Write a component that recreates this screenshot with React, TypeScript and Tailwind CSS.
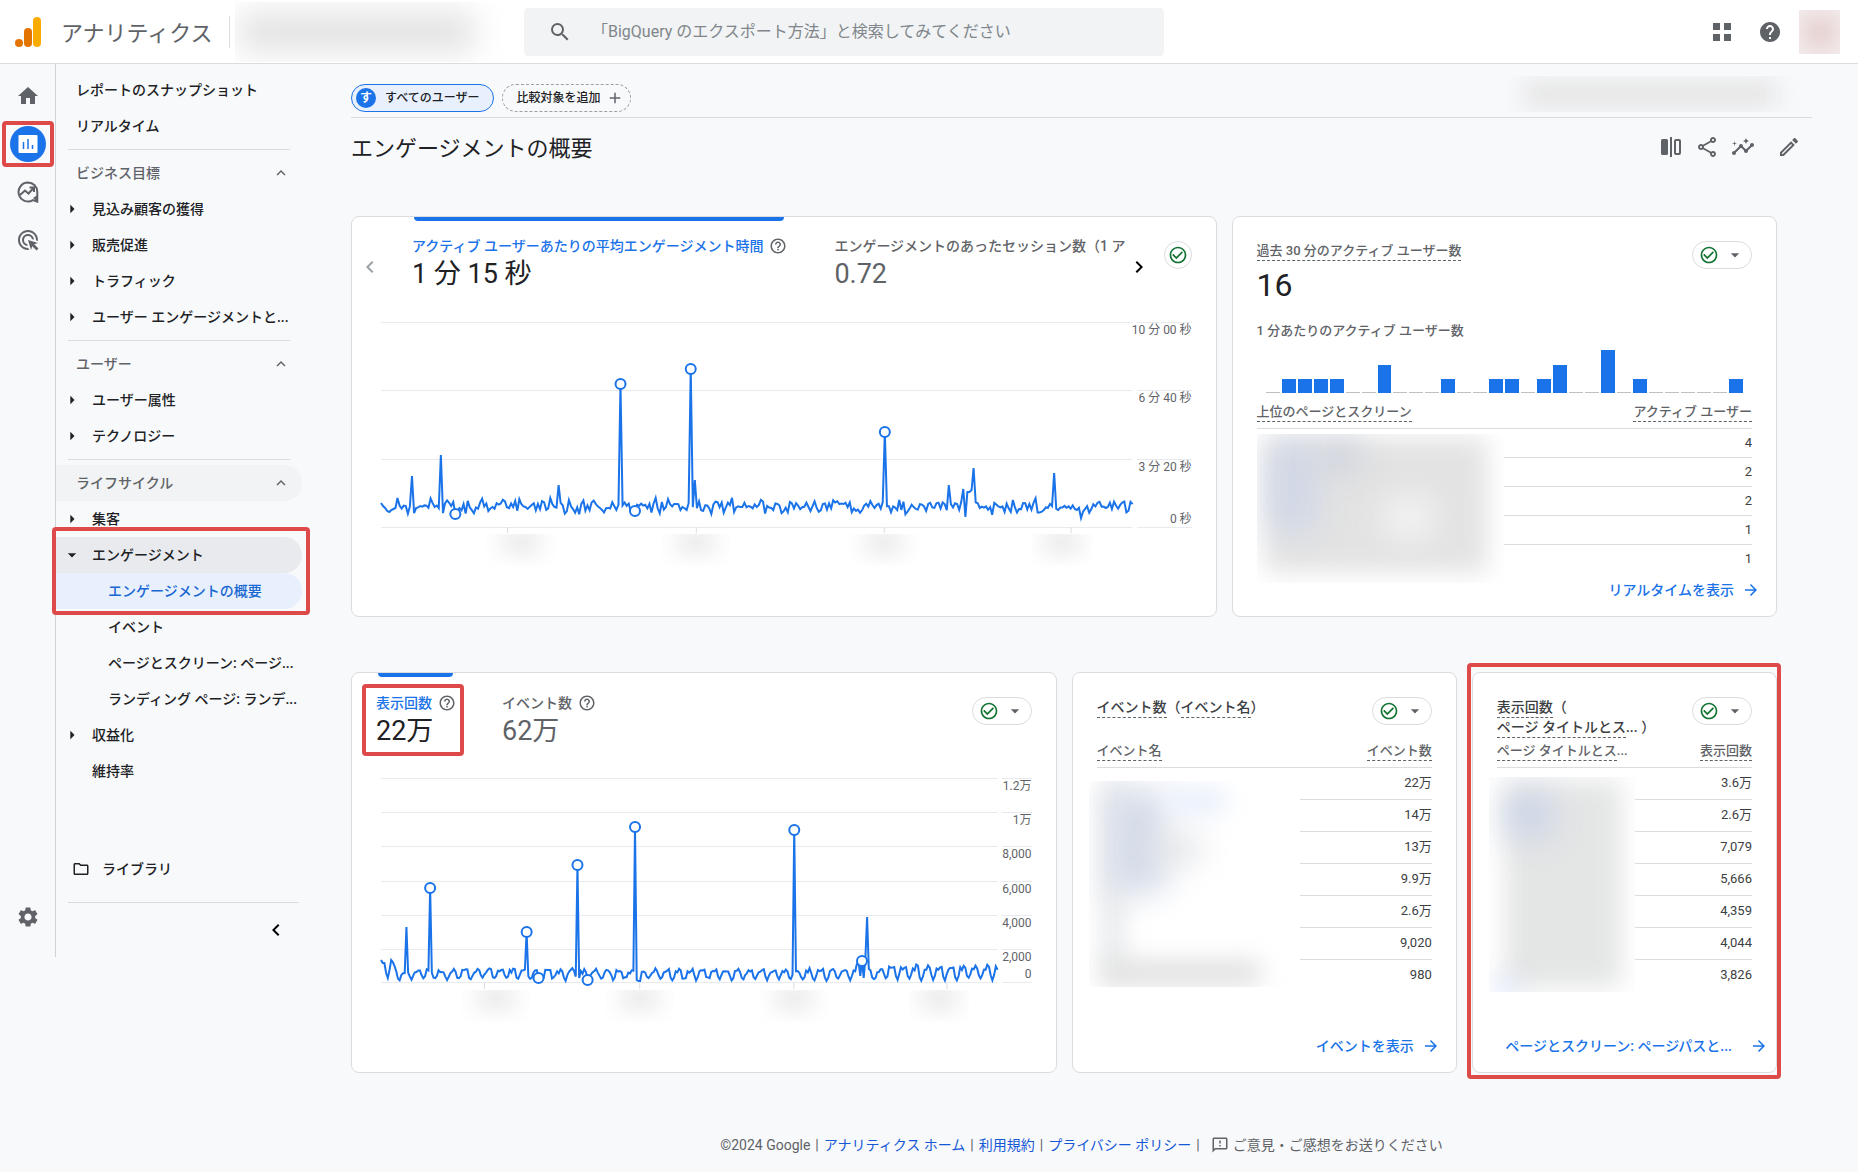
import type { ReactNode } from "react";
import {
  MdAdd,
  MdAdsClick,
  MdArrowDropDown,
  MdArrowForward,
  MdArrowRight,
  MdCheckCircleOutline,
  MdChevronLeft,
  MdChevronRight,
  MdExpandLess,
  MdHelp,
  MdHelpOutline,
  MdHome,
  MdInsights,
  MdOutlineEdit,
  MdOutlineFeedback,
  MdOutlineFolder,
  MdOutlineShare,
  MdSearch,
  MdSettings,
} from "react-icons/md";

type Point = { x: number; y: number };

const DAYS = 365;

// index of the day -> y inside the plot
const engagementSpikes: Record<number, number> = {
  0: 181, 1: 184, 2: 186, 3: 189, 4: 190, 5: 188, 6: 187, 7: 186, 8: 176,
  15: 154, 29: 133, 36: 192, 86: 163, 116: 62, 123: 189, 150: 47, 152: 158,
  244: 110, 275: 163, 282: 167, 283: 195, 284: 170, 285: 170, 286: 168,
  287: 146, 326: 151, 339: 196,
};

const viewSpikes: Record<number, number> = {
  0: 182, 1: 185, 2: 185, 3: 195, 4: 200, 5: 192, 6: 182, 7: 184, 8: 188,
  15: 149, 29: 110, 86: 154, 93: 200, 116: 87, 122: 202, 150: 49, 151: 202,
  152: 203, 153: 203, 244: 52, 281: 186, 282: 184, 284: 183, 286: 180, 287: 139,
};

function noise(i: number) {
  const v = Math.sin(i * 12.9898) * 43758.5453;
  return (v - Math.floor(v)) * 2 - 1;
}

function buildPoints(width: number, spikes: Record<number, number>, base: (i: number) => number): Point[] {
  return Array.from({ length: DAYS }, (_, i) => ({
    x: (i * width) / (DAYS - 1),
    y: spikes[i] ?? base(i),
  }));
}

const week = [0.2, 0, 0.1, 0.75, 1, 0.7, 0.15];

const engagementPoints = buildPoints(752, engagementSpikes, (i) => 184 + noise(i) * 4 + noise(i + 400) * 5);
const viewPoints = buildPoints(616, viewSpikes, (i) => {
  const top = i > 295 ? 188 : 192;
  return top + noise(i) * 2 + week[i % 7] * (201 - top);
});

function Logo() {
  return (
    <svg aria-hidden="true" className="h-[30px] w-[26px]" viewBox="0 0 26 30">
      <rect fill="#f9ab00" height="30" rx="4" width="8" x="18" y="0" />
      <rect fill="#e37400" height="19" rx="4" width="8" x="9" y="11" />
      <circle cx="4" cy="26" fill="#e37400" r="4" />
    </svg>
  );
}

function ReportsIcon() {
  return (
    <svg aria-hidden="true" className="size-5" viewBox="0 0 20 20">
      <rect fill="#fff" height="18" rx="1" width="19" x="0.5" y="1" />
      <path d="M5.5 8v7M10 5v10M14.5 11v4" fill="none" stroke="#1a73e8" strokeWidth="1.5" />
    </svg>
  );
}

function ExploreIcon() {
  return (
    <svg aria-hidden="true" className="size-[22px]" fill="none" stroke="#5f6368" strokeWidth="2" viewBox="0 0 22 22">
      <path d="M11 1.5a9.5 9.5 0 1 0 5 17.6l4.3 1.6V11A9.4 9.4 0 0 0 11 1.5Z" />
      <path d="M3 14l5-4.5 3.5 3 5-5.500M12.5 6.5h4.500V11" />
      <path d="M16 17l4.500-3v7z" fill="#5f6368" stroke="none" />
    </svg>
  );
}

function CompareIcon() {
  return (
    <svg aria-hidden="true" className="size-6" viewBox="0 0 24 24">
      <rect fill="#5f6368" height="16" rx="1.5" width="7" x="2" y="4" />
      <path d="M12 2v20" stroke="#5f6368" strokeWidth="2" />
      <rect fill="none" height="14" rx="1" stroke="#5f6368" strokeWidth="2" width="5" x="16" y="5" />
    </svg>
  );
}

function AppsIcon() {
  return (
    <svg aria-hidden="true" className="size-[18px]" fill="#5f6368" viewBox="0 0 18 18">
      <path d="M0 0h7v7H0zM11 0h7v7h-7zM0 11h7v7H0zM11 11h7v7h-7z" />
    </svg>
  );
}

function Highlight({ className }: { className: string }) {
  return <div className={`pointer-events-none absolute z-10 rounded-sm border-4 border-[#de4a4a] ${className}`} />;
}

function Header() {
  return (
    <header className="flex h-16 items-center border-b border-[#dadce0] bg-white">
      <a className="flex items-center gap-5 pl-[15px]" href="#home">
        <Logo />
        <span className="w-[153px] pt-1 text-[22px] leading-8 whitespace-nowrap text-[#5f6368]">アナリティクス</span>
      </a>
      <div className="ml-[15px] h-8 w-px bg-[#dadce0]" />
      <div className="ml-[5px] h-[60px] w-[280px] overflow-hidden px-1 py-2.5">
        <div className="h-10 w-[235px] rounded bg-[#e2e2e2] blur-lg" />
      </div>
      <label className="ml-[9px] flex h-12 w-[640px] items-center gap-5 rounded bg-[#f1f3f4] pl-6">
        <MdSearch className="size-6 text-[#5f6368]" />
        <input
          aria-label="検索"
          className="flex-1 bg-transparent text-base text-[#5f6368] outline-none placeholder:text-[#80868b]"
          placeholder="「BigQuery のエクスポート方法」と検索してみてください"
          type="search"
        />
      </label>
      <div className="ml-auto flex items-center pr-[18px]">
        <button aria-label="アプリ" className="p-3"><AppsIcon /></button>
        <button aria-label="ヘルプ" className="ml-[3px] p-3 text-[#5f6368]"><MdHelp className="size-6" /></button>
        <div className="ml-[5px] flex h-11 w-[41px] items-center justify-center overflow-hidden bg-[#f3ebeb]">
          <div className="size-6 rounded-full bg-[#d8b4b4] blur-md" />
        </div>
      </div>
    </header>
  );
}

function Rail() {
  return (
    <div className="flex w-14 flex-col items-center border-r border-[#d0d3d8] pt-2 text-[#5f6368]">
      <button aria-label="ホーム" className="flex size-12 items-center justify-center"><MdHome className="size-6" /></button>
      <div className="relative flex size-12 items-center justify-center">
        <button aria-label="レポート" className="flex size-9 items-center justify-center rounded-full bg-[#1a73e8]">
          <ReportsIcon />
        </button>
        <Highlight className="-inset-x-0.5 inset-y-px" />
      </div>
      <button aria-label="探索" className="flex size-12 items-center justify-center"><ExploreIcon /></button>
      <button aria-label="広告" className="flex size-12 items-center justify-center"><MdAdsClick className="size-6" /></button>
      <button aria-label="管理" className="mt-auto mb-4 flex size-12 items-center justify-center"><MdSettings className="size-6" /></button>
    </div>
  );
}

function NavDivider() {
  return <div className="mx-3 my-[5px] h-px bg-[#dadce0]" />;
}

function NavSection({ active, children }: { active?: boolean; children: ReactNode }) {
  return (
    <button
      className={`flex h-9 w-full items-center justify-between rounded-r-full pr-3 pl-5 text-sm font-medium text-[#5f6368] ${active ? "bg-[#f1f3f4]" : ""}`}
    >
      {children}
      <MdExpandLess className="size-[18px]" />
    </button>
  );
}

function NavItem({ arrow = "right", active, children }: { arrow?: "right" | "down" | "none"; active?: boolean; children: ReactNode }) {
  return (
    <a
      className={`flex h-9 items-center gap-2 rounded-r-full pl-1 text-sm font-medium whitespace-nowrap ${active ? "bg-[#e8eaed]" : ""}`}
      href="#nav"
    >
      <span className="flex w-6 justify-center">
        {arrow === "right" && <MdArrowRight className="size-5" />}
        {arrow === "down" && <MdArrowDropDown className="size-5" />}
      </span>
      {children}
    </a>
  );
}

function NavSubItem({ active, children }: { active?: boolean; children: ReactNode }) {
  return (
    <a
      className={`flex h-9 items-center rounded-r-full pl-[52px] text-sm font-medium whitespace-nowrap ${active ? "bg-[#e8f0fe] text-[#1967d2]" : ""}`}
      href="#nav"
    >
      {children}
    </a>
  );
}

function Sidebar() {
  return (
    <nav className="w-[246px] pt-2 text-[#202124]">
      <a className="flex h-9 items-center pl-5 text-sm font-medium" href="#nav">レポートのスナップショット</a>
      <a className="flex h-9 items-center pl-5 text-sm font-medium" href="#nav">リアルタイム</a>
      <NavDivider />
      <NavSection>ビジネス目標</NavSection>
      <NavItem>見込み顧客の獲得</NavItem>
      <NavItem>販売促進</NavItem>
      <NavItem>トラフィック</NavItem>
      <NavItem>ユーザー エンゲージメントと...</NavItem>
      <NavDivider />
      <NavSection>ユーザー</NavSection>
      <NavItem>ユーザー属性</NavItem>
      <NavItem>テクノロジー</NavItem>
      <NavDivider />
      <NavSection active>ライフサイクル</NavSection>
      <NavItem>集客</NavItem>
      <div className="relative">
        <NavItem active arrow="down">エンゲージメント</NavItem>
        <NavSubItem active>エンゲージメントの概要</NavSubItem>
        <Highlight className="-top-2.5 -right-2 -bottom-1.5 -left-1" />
      </div>
      <NavSubItem>イベント</NavSubItem>
      <NavSubItem>ページとスクリーン: ページ...</NavSubItem>
      <NavSubItem>ランディング ページ: ランデ...</NavSubItem>
      <NavItem>収益化</NavItem>
      <NavItem arrow="none">維持率</NavItem>
      <a className="mt-[62px] flex h-9 items-center gap-3 pl-4 text-sm font-medium" href="#library">
        <MdOutlineFolder className="size-[18px]" />
        <span>ライブラリ</span>
      </a>
      <div className="mt-[15px] mr-[3px] ml-3 h-px bg-[#dadce0]" />
      <div className="flex h-[54px] items-center justify-end pr-3.5">
        <button aria-label="折りたたむ" className="text-black"><MdChevronLeft className="size-6" /></button>
      </div>
    </nav>
  );
}

function Card({ className = "", children }: { className?: string; children: ReactNode }) {
  return (
    <section className={`relative flex h-[401px] min-w-0 flex-col rounded-lg border border-[#dadce0] bg-white ${className}`}>
      {children}
    </section>
  );
}

function StatusPill() {
  return (
    <button aria-label="データの状態" className="flex h-7 w-[60px] shrink-0 items-center justify-between rounded-full border border-[#dadce0] pr-1.5 pl-1.5">
      <MdCheckCircleOutline className="size-5 text-[#137333]" />
      <MdArrowDropDown className="size-5 text-[#5f6368]" />
    </button>
  );
}

function Dashed({ children }: { children: ReactNode }) {
  return <span className="border-b border-dashed border-[#5f6368] pb-0.5">{children}</span>;
}

function Metric({ label, value, active, help = true }: { label: string; value: string; active?: boolean; help?: boolean }) {
  return (
    <button className="block self-start text-left whitespace-nowrap">
      <span className="flex h-5 items-center gap-1.5">
        <span className={`text-sm leading-5 font-medium ${active ? "text-[#1a73e8]" : "text-[#5f6368]"}`}>{label}</span>
        {help && <MdHelpOutline className="size-[18px] text-[#5f6368]" />}
      </span>
      <span className={`block text-[27px] leading-9 ${active ? "text-[#202124]" : "text-[#5f6368]"}`}>{value}</span>
    </button>
  );
}

type ChartProps = {
  width: number;
  grid: number[];
  labels: { text: string; className: string }[];
  labelWidth: string;
  ticks: number[];
  points: Point[];
  markers: number[];
  name: string;
};

function LineChart({ width, grid, labels, labelWidth, ticks, points, markers, name }: ChartProps) {
  return (
    <div className="flex gap-1">
      <svg aria-label={name} className="h-[212px] min-w-0 flex-1 overflow-visible" preserveAspectRatio="none" role="img" viewBox={`0 0 ${width} 212`}>
        {grid.map((y) => (
          <path d={`M0 ${y + 0.5}H${width}`} key={y} stroke="#e8eaed" />
        ))}
        {ticks.map((x) => (
          <path d={`M${x + 0.5} 205v6`} key={x} stroke="#dadce0" />
        ))}
        <polyline
          fill="none"
          points={points.map((p) => `${p.x.toFixed(1)},${p.y.toFixed(1)}`).join(" ")}
          stroke="#1a73e8"
          strokeWidth="2"
        />
        {markers.map((i) => (
          <circle cx={points[i].x} cy={points[i].y} fill="#fff" key={i} r="5" stroke="#1a73e8" strokeWidth="2" />
        ))}
      </svg>
      <div className={`relative h-[212px] shrink-0 ${labelWidth}`}>
        <svg aria-hidden="true" className="size-full" preserveAspectRatio="none" viewBox="0 0 10 212">
          {grid.map((y) => (
            <path d={`M0 ${y + 0.5}H10`} key={y} stroke="#e8eaed" />
          ))}
        </svg>
        {labels.map((l) => (
          <span className={`absolute right-0 text-xs leading-4 whitespace-nowrap text-[#5f6368] ${l.className}`} key={l.text}>
            {l.text}
          </span>
        ))}
      </div>
    </div>
  );
}

function HiddenLabel({ className }: { className: string }) {
  return (
    <div className={`h-8 overflow-hidden ${className}`}>
      <div className="mx-auto h-4 w-9 bg-[#dcdcdc] blur-md" />
    </div>
  );
}

function EngagementCard() {
  return (
    <Card>
      <div className="absolute top-0 left-[62px] h-1 w-[370px] rounded-b bg-[#1a73e8]" />
      <div className="flex h-[105px] pt-[19px] pr-6">
        <button aria-label="前へ" className="ml-1.5 flex h-[62px] w-6 items-center justify-center text-[#9aa0a6]">
          <MdChevronLeft className="size-6" />
        </button>
        <div className="ml-[30px] flex min-w-0 flex-1 gap-[47px] overflow-hidden">
          <Metric active label="アクティブ ユーザーあたりの平均エンゲージメント時間" value="1 分 15 秒" />
          <Metric help={false} label="エンゲージメントのあったセッション数（1 ア" value="0.72" />
        </div>
        <button aria-label="次へ" className="flex h-[62px] w-6 items-center justify-center text-black">
          <MdChevronRight className="size-6" />
        </button>
        <button aria-label="データの状態" className="mt-[5px] ml-[13px] flex size-7 items-center justify-center rounded-full border border-[#dadce0] text-[#137333]">
          <MdCheckCircleOutline className="size-5" />
        </button>
      </div>
      <div className="pr-6 pl-[29px]">
        <LineChart
          grid={[0, 68, 137, 205]}
          labelWidth="w-[55px]"
          labels={[
            { text: "10 分 00 秒", className: "top-0" },
            { text: "6 分 40 秒", className: "top-[68px]" },
            { text: "3 分 20 秒", className: "top-[137px]" },
            { text: "0 秒", className: "top-[189px]" },
          ]}
          markers={[36, 116, 123, 150, 244]}
          name="平均エンゲージメント時間"
          points={engagementPoints}
          ticks={[126, 315, 503, 690]}
          width={752}
        />
        <div className="flex">
          <HiddenLabel className="ml-[105px] w-[70px]" />
          <HiddenLabel className="ml-[105px] w-[70px]" />
          <HiddenLabel className="ml-[118px] w-[70px]" />
          <HiddenLabel className="ml-[113px] w-[60px]" />
        </div>
      </div>
    </Card>
  );
}

const perMinute = [0, 1, 1, 1, 1, 0, 0, 2, 0, 0, 0, 1, 0, 0, 1, 1, 0, 1, 2, 0, 0, 3, 0, 1, 0, 0, 0, 0, 0, 1];

const barStyle: Record<number, string> = {
  0: "h-px bg-[#bdc1c6]",
  1: "h-3.5 bg-[#1a73e8]",
  2: "h-7 bg-[#1a73e8]",
  3: "h-[43px] bg-[#1a73e8]",
};

type TableProps = {
  left: ReactNode;
  right: string;
  values: string[];
  rowClass: string;
  blurClass: string;
  children: ReactNode;
};

function MetricTable({ left, right, values, rowClass, blurClass, children }: TableProps) {
  return (
    <div className="relative">
      <table className="w-full text-[13px] leading-5 text-[#3c4043]">
        <thead>
          <tr className="h-[26px] border-b border-[#dadce0] align-top font-medium text-[#5f6368]">
            <th className="text-left font-medium">{left}</th>
            <th className="text-right font-medium"><Dashed>{right}</Dashed></th>
          </tr>
        </thead>
        <tbody>
          {values.map((v, i) => (
            <tr className={`border-b border-[#dadce0] last:border-0 ${rowClass}`} key={i}>
              <td />
              <td className="text-right">{v}</td>
            </tr>
          ))}
        </tbody>
      </table>
      <div className={`absolute overflow-hidden bg-white ${blurClass}`}>{children}</div>
    </div>
  );
}

function CardLink({ long, children }: { long?: boolean; children: ReactNode }) {
  return (
    <a
      className={`absolute bottom-4 flex h-5 items-center text-sm font-medium whitespace-nowrap text-[#1a73e8] ${long ? "right-2 gap-[18px]" : "right-4 gap-2"}`}
      href="#report"
    >
      {children}
      <MdArrowForward className="size-[18px]" />
    </a>
  );
}

function RealtimeCard() {
  return (
    <Card className="px-6">
      <div className="flex h-[50px] justify-between pt-6">
        <h2 className="text-[13px] leading-5 font-medium text-[#5f6368]"><Dashed>過去 30 分のアクティブ ユーザー数</Dashed></h2>
        <StatusPill />
      </div>
      <p className="text-[32px] leading-9 text-[#202124]">16</p>
      <p className="mt-[18px] text-[13px] leading-5 font-medium text-[#5f6368]">1 分あたりのアクティブ ユーザー数</p>
      <div className="mx-[9px] mt-[7px] flex h-[45px] items-end gap-0.5">
        {perMinute.map((n, i) => (
          <div className={`flex-1 ${barStyle[n]}`} key={i} />
        ))}
      </div>
      <div className="mt-[9px]">
        <MetricTable
          blurClass="left-0 top-8 h-[149px] w-1/2"
          left={<Dashed>上位のページとスクリーン</Dashed>}
          right="アクティブ ユーザー"
          rowClass="h-[29px]"
          values={["4", "2", "2", "1", "1"]}
        >
          <div className="mt-1 ml-2 h-[134px] w-[222px] bg-[#e3e3e3] blur-md" />
          <div className="absolute top-2 left-3 h-[90px] w-12 bg-[#d0d7e6] blur-lg" />
          <div className="absolute top-2 left-16 h-7 w-10 bg-[#ccd1de] blur-lg" />
          <div className="absolute top-16 left-32 h-10 w-12 bg-[#f4f4f4] blur-lg" />
        </MetricTable>
      </div>
      <CardLink>リアルタイムを表示</CardLink>
    </Card>
  );
}

function ViewsCard() {
  return (
    <Card>
      <div className="absolute top-0 left-[26px] h-1 w-[75px] rounded-b bg-[#1a73e8]" />
      <div className="flex h-[105px] justify-between px-6">
        <div className="flex gap-[46px] pt-5">
          <div className="relative">
            <Metric active label="表示回数" value="22万" />
            <Highlight className="-top-[9px] -right-2 -left-3.5 h-[72px]" />
          </div>
          <Metric label="イベント数" value="62万" />
        </div>
        <div className="pt-6"><StatusPill /></div>
      </div>
      <div className="pr-6 pl-[29px]">
        <LineChart
          grid={[0, 34, 68, 103, 137, 171, 204]}
          labelWidth="w-[30px]"
          labels={[
            { text: "1.2万", className: "top-0" },
            { text: "1万", className: "top-[34px]" },
            { text: "8,000", className: "top-[68px]" },
            { text: "6,000", className: "top-[103px]" },
            { text: "4,000", className: "top-[137px]" },
            { text: "2,000", className: "top-[171px]" },
            { text: "0", className: "top-[188px]" },
          ]}
          markers={[29, 86, 93, 116, 122, 150, 244, 284]}
          name="表示回数の推移"
          points={viewPoints}
          ticks={[103, 258, 412, 565]}
          width={616}
        />
        <div className="flex">
          <HiddenLabel className="ml-[80px] w-[70px]" />
          <HiddenLabel className="ml-[74px] w-[70px]" />
          <HiddenLabel className="ml-[84px] w-[70px]" />
          <HiddenLabel className="ml-[80px] w-[60px]" />
        </div>
      </div>
    </Card>
  );
}

function EventsCard() {
  return (
    <Card className="px-6">
      <div className="flex h-[68px] justify-between pt-6">
        <h2 className="text-sm leading-5 font-medium text-[#3c4043]">
          <Dashed>イベント数</Dashed>（<Dashed>イベント名</Dashed>）
        </h2>
        <StatusPill />
      </div>
      <MetricTable
        blurClass="-left-2 top-10 h-[206px] w-[211px]"
        left={<Dashed>イベント名</Dashed>}
        right="イベント数"
        rowClass="h-8"
        values={["22万", "14万", "13万", "9.9万", "2.6万", "9,020", "980"]}
      >
        <div className="absolute top-0 left-3 h-[200px] w-6 bg-[#e8eaec] blur-md" />
        <div className="absolute top-2 left-5 h-[104px] w-14 bg-[#d4dbe8] blur-lg" />
        <div className="absolute top-2 left-20 h-6 w-14 bg-[#e6eefb] blur-md" />
        <div className="absolute top-14 left-16 h-6 w-12 bg-[#dfe1e4] blur-lg" />
        <div className="absolute top-[180px] left-4 h-6 w-[155px] bg-[#dedede] blur-md" />
      </MetricTable>
      <CardLink>イベントを表示</CardLink>
    </Card>
  );
}

function PagesCard() {
  return (
    <Card className="px-6">
      <div className="flex h-[68px] justify-between pt-6">
        <h2 className="text-sm leading-5 font-medium whitespace-nowrap text-[#3c4043]">
          <Dashed>表示回数</Dashed>（<br />
          <Dashed>ページ タイトルとス</Dashed>... ）
        </h2>
        <StatusPill />
      </div>
      <MetricTable
        blurClass="-left-2 top-9 h-[215px] w-[146px]"
        left={<><Dashed>ページ タイトルとス</Dashed>...</>}
        right="表示回数"
        rowClass="h-8"
        values={["3.6万", "2.6万", "7,079", "5,666", "4,359", "4,044", "3,826"]}
      >
        <div className="mt-1 ml-4 h-[206px] w-[116px] bg-[#e4e5e5] blur-md" />
        <div className="absolute top-4 left-4 h-11 w-12 bg-[#ccd5e8] blur-lg" />
        <div className="absolute bottom-0 left-1 h-3 w-7 bg-[#d5e0fb] blur-md" />
      </MetricTable>
      <CardLink long>ページとスクリーン: ページパスと...</CardLink>
      <Highlight className="-top-2.5 -right-[5px] -bottom-[7px] -left-1.5" />
    </Card>
  );
}

function Footer() {
  return (
    <footer className="mt-[62px] flex h-[37px] items-start justify-center gap-[5px] text-sm leading-5 text-[#5f6368]">
      <span>©2024 Google</span>
      <span>|</span>
      <a className="text-[#1558d6]" href="#home">アナリティクス ホーム</a>
      <span>|</span>
      <a className="text-[#1558d6]" href="#terms">利用規約</a>
      <span>|</span>
      <a className="text-[#1558d6]" href="#privacy">プライバシー ポリシー</a>
      <span>|</span>
      <button className="ml-1.5 flex items-center gap-1">
        <MdOutlineFeedback className="size-[18px]" />
        ご意見・ご感想をお送りください
      </button>
    </footer>
  );
}

export default function App() {
  return (
    <div className="min-h-screen bg-[#f8f9fb] font-[Roboto,'Noto_Sans_CJK_JP',sans-serif]">
      <Header />
      <div className="flex">
        <div className="flex shrink-0 self-start">
          <Rail />
          <Sidebar />
        </div>
        <main className="min-w-0 flex-1 pr-[46px] pl-[49px]">
          <div className="flex h-[54px] items-start gap-2 border-b border-[#dadce0] pt-5 text-xs font-medium text-[#202124]">
            <button className="flex h-7 items-center rounded-full border border-[#1a73e8] bg-[#e8f0fe] pr-3.5 pl-1">
              <span className="mr-[9px] flex size-5 items-center justify-center rounded-full bg-[#1a73e8] font-bold text-white">す</span>
              すべてのユーザー
            </button>
            <button className="flex h-7 items-center gap-1.5 rounded-full border border-dashed border-[#9aa0a6] pr-1.5 pl-[13px]">
              比較対象を追加
              <MdAdd className="size-[18px] text-[#5f6368]" />
            </button>
            <div className="-mt-2 ml-auto h-9 w-[304px] overflow-hidden py-1.5 pr-9 pl-4">
              <div className="h-6 bg-[#e2e2e2] blur-md" />
            </div>
          </div>
          <div className="mt-[17px] flex h-7 items-center justify-between pr-[11px]">
            <h1 className="text-[22px] leading-7 text-[#202124]">エンゲージメントの概要</h1>
            <div className="-mt-1 flex items-center gap-3 text-[#5f6368]">
              <button aria-label="比較"><CompareIcon /></button>
              <button aria-label="共有"><MdOutlineShare className="size-6" /></button>
              <button aria-label="分析情報"><MdInsights className="size-6" /></button>
              <button aria-label="編集" className="ml-2.5"><MdOutlineEdit className="size-6" /></button>
            </div>
          </div>
          <div className="mt-[53px] mr-[35px] flex flex-col gap-[55px]">
            <div className="grid grid-cols-[865fr_545fr] gap-[15px]">
              <EngagementCard />
              <RealtimeCard />
            </div>
            <div className="grid grid-cols-[705fr_385fr_305fr] gap-[15px]">
              <ViewsCard />
              <EventsCard />
              <PagesCard />
            </div>
          </div>
          <Footer />
        </main>
      </div>
    </div>
  );
}
